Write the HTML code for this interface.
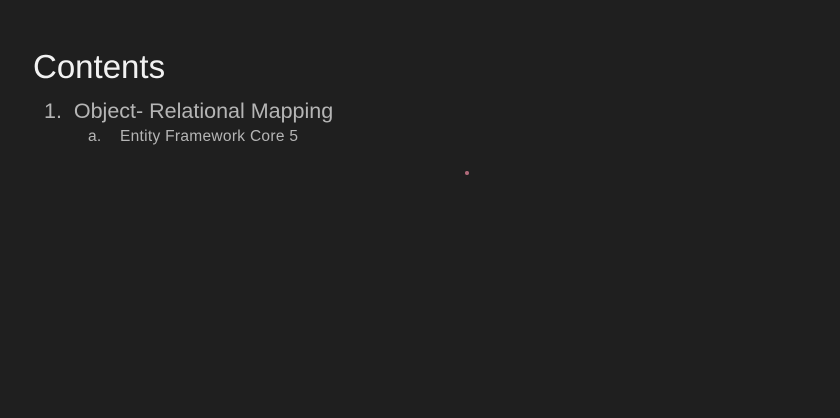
<!DOCTYPE html>
<html><head><style>
html,body{margin:0;padding:0}
body{width:840px;height:418px;background:#1f1f1f;position:relative;overflow:hidden;font-family:"Liberation Sans",sans-serif}
.t{position:absolute;left:33px;top:50px;font-size:33px;color:#f2f2f2;line-height:1}
.l1{position:absolute;left:44px;top:101px;font-size:21.5px;color:#b5b5b5;line-height:1;white-space:pre}
.l2{position:absolute;left:88px;top:129px;font-size:15.5px;color:#b5b5b5;line-height:1;white-space:pre;letter-spacing:0.3px}
.dot{position:absolute;left:465px;top:171px;width:4px;height:4px;border-radius:50%;background:#b06a7a}
</style></head><body>
<div class="t">Contents</div>
<div class="l1">1.  Object- Relational Mapping</div>
<div class="l2">a.    Entity Framework Core 5</div>
<div class="dot"></div>
</body></html>
